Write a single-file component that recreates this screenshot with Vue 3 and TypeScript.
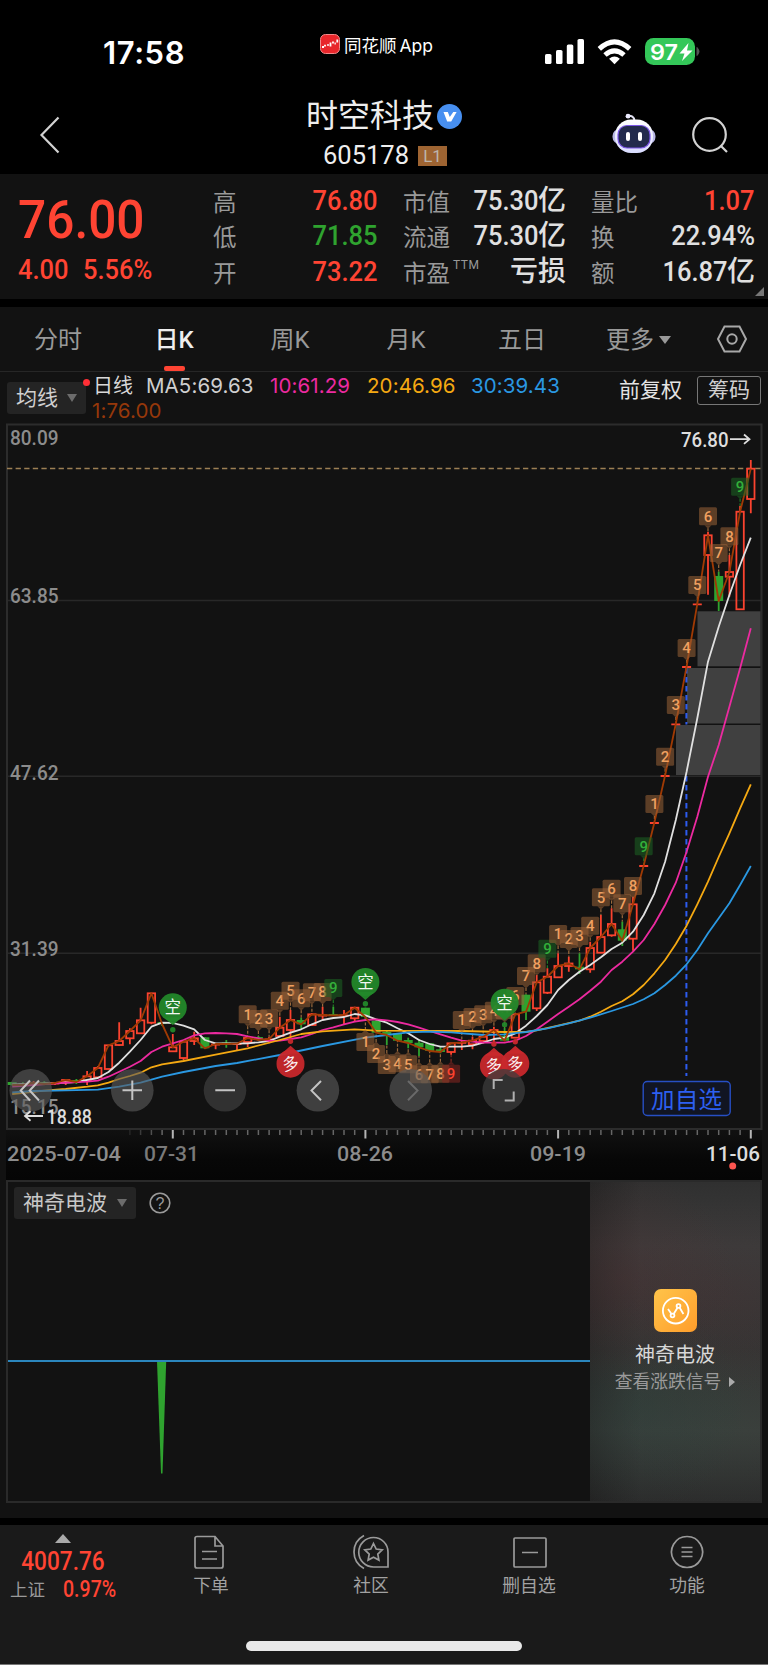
<script setup lang="ts">
type Candle = [up: number, high: number, low: number, top: number, bottom: number]
type Point = [k: number, y: number]

const STEP = 10.704
const px = (k: number): number => +(12.2 + k * STEP).toFixed(1)

const raw: Candle[] = [
  [0, 1082, 1085.5, 1082, 1085], [0, 1082, 1086, 1083, 1085], [1, 1081, 1086, 1083, 1084], [0, 1081, 1085, 1082, 1084],
  [1, 1082, 1085, 1083, 1084], [1, 1079, 1085, 1080, 1082], [0, 1079, 1084, 1080.5, 1082], [1, 1071, 1085, 1076.3, 1080.7],
  [1, 1066, 1077.3, 1068, 1077.3], [1, 1045.3, 1069, 1045.3, 1069], [1, 1022.3, 1046, 1041, 1045], [1, 1028.3, 1044.3, 1031, 1038.3],
  [1, 1007.7, 1034, 1020.3, 1033.3], [1, 993, 1024.3, 993.3, 1022.7], [0, 1022, 1026, 1022.5, 1024], [1, 1034, 1051.3, 1047.3, 1051.3],
  [1, 1041.7, 1060, 1041.7, 1058], [1, 1031.7, 1045, 1038.3, 1041], [0, 1037, 1049, 1037.3, 1048.3], [1, 1042.7, 1049.3, 1044, 1045],
  [0, 1040, 1047.7, 1043, 1044], [1, 1043.7, 1050, 1043.7, 1044.5], [1, 1036, 1047, 1038, 1042], [0, 1036, 1041, 1037, 1040],
  [1, 1037, 1043.3, 1039, 1040], [1, 1016.7, 1036.7, 1027.7, 1036], [1, 1010, 1040, 1020, 1030], [0, 1017.7, 1029.3, 1020, 1024.3],
  [1, 1013, 1026, 1014.3, 1025], [1, 1006.7, 1020, 1015, 1016], [0, 1006.7, 1015.5, 1014.5, 1015.5], [1, 1010, 1024, 1015, 1016],
  [1, 1006.7, 1021.7, 1007.7, 1018.3], [0, 1007.7, 1020, 1007.7, 1017], [0, 1020, 1033, 1020.7, 1032.7], [0, 1030, 1045, 1032, 1035],
  [0, 1033, 1041, 1033.3, 1040.7], [0, 1037.7, 1048.3, 1040, 1043], [0, 1039.3, 1056, 1042.7, 1047.3], [0, 1043, 1051.5, 1043.3, 1051],
  [0, 1046.7, 1053.3, 1049.3, 1052], [1, 1043, 1054.7, 1043.3, 1052], [1, 1040, 1050, 1042.3, 1043.3], [1, 1036.7, 1049.3, 1040.7, 1044.3],
  [1, 1036, 1043.3, 1036.7, 1041], [1, 1026.7, 1041.7, 1030, 1032], [0, 1028, 1041, 1036, 1040.7], [1, 1014.3, 1037.7, 1014.3, 1037.7],
  [0, 994.5, 1020, 994.7, 1011.7], [1, 975, 1011, 982.3, 1008.3], [1, 968.3, 994, 976.7, 992.7], [1, 953.3, 977.5, 966, 977.3],
  [1, 956.7, 971.7, 963.5, 966], [0, 953.3, 974, 966.7, 969.3], [1, 941.7, 972.7, 948, 969.3], [1, 915, 953.3, 937, 952.7],
  [1, 908.3, 936.7, 924, 935.3], [0, 921.7, 946, 929.3, 940.7], [1, 896.7, 950.7, 904.3, 938.7], [1, 865.5, 866.5, 865.5, 866.5],
  [1, 822.5, 823.5, 822.5, 823.5], [1, 775.5, 776.5, 775.5, 776.5], [1, 723.8, 724.8, 723.8, 724.8], [1, 666.5, 667.5, 666.5, 667.5],
  [1, 603.8, 604.8, 603.8, 604.8], [1, 531.7, 594.7, 535.3, 555], [0, 571.7, 611, 576, 601], [1, 555, 596.7, 572, 576.7],
  [1, 506, 609.3, 511.7, 609.3], [1, 460, 513.3, 468.7, 499],
]
const candles = raw.map(([up, high, low, top, bottom], k) => ({
  k, x: px(k), up: up === 1, high, low, top, bottom, flat: bottom - top < 1.8,
}))

const toLine = (pts: Point[]): string => pts.map(([k, y]) => `${px(k)},${y}`).join(' ')
const seq = (start: number, ys: number[]): Point[] => ys.map((y, i) => [start + i, y] as Point)

const closeLine = toLine(candles.map((c) => [c.k, c.up ? c.top : c.bottom] as Point))
const ma5 = toLine([[0, 1084.5], [3, 1083.5], [6, 1082], ...seq(7, [1080, 1078, 1072, 1062.7, 1051.7, 1040, 1026.7, 1022.7, 1023, 1025.7, 1029.3, 1040, 1043.3, 1043.3, 1043.5, 1043.3,
  1042.3, 1041, 1036.7, 1032.7, 1029.3, 1024.3, 1020, 1018, 1017, 1014, 1015.3, 1019.3, 1022.7, 1028.3, 1033.3, 1040, 1044,
  1046.7, 1046.7, 1046.7, 1045.7, 1042.7, 1039, 1037.7, 1033.3, 1025.7, 1016, 1005, 990, 980, 971.7, 965, 957.3, 949, 942.7, 931.7,
  915, 893.3, 861.7, 820, 771.7, 718.3, 661.7, 626.7, 595, 565, 537.7])])
const ma10 = toLine([[0, 1086.7], [2, 1085], [4, 1083.3], ...seq(6, [1082, 1081.7, 1080.7, 1076.7, 1071.7, 1066.7, 1061, 1052, 1046.7, 1043.3, 1040, 1035.3, 1033.3, 1033, 1033.3, 1034, 1036.3,
  1038.3, 1041, 1040.7, 1039, 1037.3, 1034, 1030, 1027.3, 1024.3, 1021.7, 1020, 1019.3, 1020.3, 1022, 1024.3, 1027.7, 1031,
  1034.3, 1037.7, 1040.7, 1041.7, 1042.7, 1042.7, 1042.7, 1040.7, 1036, 1029.3, 1021.7, 1014, 1006.7, 999.3, 990.7, 981.7, 970, 961.7,
  951.7, 940, 924, 905, 882.7, 851.7, 816.7, 776.7, 745, 706.7, 668.3, 628.3])])
const ma20 = toLine([[0, 1094], [3, 1090.7], [5, 1089], [7, 1086.7], [8, 1085.3], [9, 1082.7], [10, 1079], [11, 1076], [12, 1072.7], [13, 1067.3], [14, 1064.3],
  [16, 1061], [19, 1054.7], [22, 1048.3], [25, 1040], [27, 1034], [29, 1031.3], [32, 1029.3], [34, 1030.7], [42, 1031], [46, 1032],
  [48, 1032], [49, 1030.3], [51, 1025.7], [53, 1020.7], [54, 1016.7], ...seq(55, [1011.7, 1006, 1001.3, 994.3, 985, 973.3, 960, 944, 925.7, 904.3, 881.7, 857, 833.3, 808.3, 784.3])])
const ma30 = toLine([[0, 1092.3], [2, 1091], [5, 1090.3], [8, 1089.7], [10, 1086.7], [12, 1082.7], [14, 1076.7], [16, 1072], [19, 1066], [21, 1063],
  [25, 1055], [29, 1046], [33, 1037.7], [35, 1035], [37, 1032.3], [39, 1031.7], [41, 1032.3], [44, 1035], [46, 1034.3], [48, 1032], [50, 1028.3],
  [52, 1023.3], [54, 1017.7], [56, 1011], [58, 1004], ...seq(59, [999.3, 993.3, 985, 975.7, 964.3, 950, 933.3, 918.3, 903.3, 885, 866])])

type Tone = 'tan' | 'green' | 'red'
interface Badge { k: number; n: number; y: number; below: boolean; tone: Tone }
const run = (k0: number, ys: number[], below: boolean, nine: Tone): Badge[] =>
  ys.map((y, i) => ({ k: k0 + i, n: i + 1, y, below, tone: i === 8 ? nine : 'tan' }))
const badges: Badge[] = [
  ...run(22, [1014.3, 1019, 1018.3, 1000.7, 990.7, 998.3, 992.3, 992, 988], false, 'green'),
  ...run(33, [1042, 1054, 1065, 1063.3, 1064.3, 1074.3, 1074.3, 1073.7, 1073.7], true, 'red'),
  ...run(42, [1020, 1017, 1014.3, 1010.7, 1010, 996, 976, 963.3, 948.7], false, 'green'),
  ...run(51, [934, 939, 936, 925.7, 897.3, 888.7, 903.3, 886, 846.3], false, 'green'),
  ...run(60, [804, 756.7, 705, 648, 585, 516.3, 553, 536.3, 486.7], false, 'green'),
]
const badgePath = (b: Badge): string => {
  const x = px(b.k)
  const d = b.below ? -1 : 1
  return `M${x - 3.5} ${b.y + 9 * d}h7l-3.5 ${3.5 * d}z`
}

const signals = [
  { k: 15, y: 1007.3, dot: 1029.7, text: '空', sell: true },
  { k: 33, y: 982, dot: 1003.7, text: '空', sell: true },
  { k: 46, y: 1002.7, dot: 1024.7, text: '空', sell: true },
  { k: 26, y: 1063.7, dot: 1041.3, text: '多', sell: false },
  { k: 45, y: 1065.7, dot: 1044, text: '多', sell: false },
  { k: 47, y: 1063.7, dot: 1041.7, text: '多', sell: false },
]
const pinPath = (k: number, y: number, d: number): string => {
  const x = px(k)
  return `M${x - 9} ${y + 10 * d}L${x} ${y + 18 * d}L${x + 9} ${y + 10 * d}z`
}

const priceLabels = [
  { t: '80.09', y: 445 }, { t: '63.85', y: 603.3 }, { t: '47.62', y: 779.7 }, { t: '31.39', y: 956.3 }, { t: '15.15', y: 1114 },
]
const ticks = Array.from({ length: 59 }, (_, i) => {
  const k = i + 11
  return { x: px(k), major: [15, 33, 51, 69].includes(k), op: Math.min(1, (i + 1) / 4) }
})
const dates = [
  { t: '2025-07-04', x: 7, w: 114, c: '#8c8c8c' }, { t: '07-31', x: 144, w: 55, c: '#7a7a7a' }, { t: '08-26', x: 337, w: 56, c: '#8c8c8c' },
  { t: '09-19', x: 530, w: 56, c: '#8c8c8c' }, { t: '11-06', x: 706, w: 54, c: '#dcdcdc' },
]

const quotes = [
  [{ l: '高', v: '76.80', c: 'up' }, { l: '低', v: '71.85', c: 'down' }, { l: '开', v: '73.22', c: 'up' }],
  [{ l: '市值', v: '75.30', u: '亿' }, { l: '流通', v: '75.30', u: '亿' }, { l: '市盈', sup: 'TTM', v: '', u: '亏损' }],
  [{ l: '量比', v: '1.07', c: 'up' }, { l: '换', v: '22.94%' }, { l: '额', v: '16.87', u: '亿' }],
] as { l: string; v: string; c?: string; u?: string; sup?: string }[][]

const tabs = ['分时', '日K', '周K', '月K', '五日']
</script>

<template>
  <div class="phone">
    <header class="top">
      <div class="status">
        <span class="clock">17:58</span>
        <div class="app">
          <svg width="20" height="20" viewBox="0 0 20 20"><rect x=".5" y=".5" width="19" height="19" rx="5" fill="#e8262b" stroke="#f08a8a" /><path d="M2 13h2M5 12.5v-1.8M7.3 11h1.4M10.5 12.5V8.5M13 9.5V7.5M14.5 9.5h1.3M17.3 8.5v-3" stroke="#fff" stroke-width="1.8" /></svg>
          <span>同花顺<i>App</i></span>
        </div>
        <svg class="radio" width="160" height="30" viewBox="545 37 160 30">
          <g fill="#fff">
            <rect x="545" y="54" width="6.5" height="10" rx="1.6" /><rect x="556" y="50" width="6.5" height="14" rx="1.6" />
            <rect x="566.8" y="44.5" width="6.5" height="19.5" rx="1.6" /><rect x="577.5" y="39" width="6.5" height="25" rx="1.6" />
            <path d="M614.5 64.2l-5.4-5.5q5.4-4.4 10.8 0z" />
          </g>
          <g fill="none" stroke="#fff" stroke-width="5"><path d="M599.3 48.8q15.2-14 30.4 0" /><path d="M605 55q9.5-8.4 19 0" /></g>
          <rect x="645" y="38" width="50" height="27" rx="8.5" fill="#34c759" />
          <path d="M697 47.5q4 4 0 8z" fill="#555" stroke="#555" />
          <text x="650" y="60" class="bat" textLength="28" lengthAdjust="spacingAndGlyphs">97</text>
          <path d="M688.5 43l-9 10.500h5l-2.500 7.500 10.500-10.500h-5.500z" fill="#fff" />
        </svg>
      </div>
      <nav class="nav">
        <svg class="back" width="24" height="40" viewBox="0 0 24 40"><path d="M20.5 2.5L3.5 20l17 17.5" fill="none" stroke="#d2d2d2" stroke-width="2.2" /></svg>
        <div class="title">
          <div class="name">时空科技<svg width="25" height="25" viewBox="0 0 25 25"><circle cx="12.5" cy="12.5" r="12.5" fill="#478ff0" /><path d="M6.500 8h4.300l2 5 3.500-5h3.300l-5.400 9.500h-4z" fill="#fff" /></svg></div>
          <div class="code">605178<b>L1</b></div>
        </div>
        <svg class="bot" width="44" height="41" viewBox="0 0 44 41">
          <defs>
            <linearGradient id="shell" x1="0" y1="0" x2="0" y2="1"><stop offset="0" stop-color="#fff" /><stop offset="1" stop-color="#d9dcff" /></linearGradient>
          </defs>
          <path d="M15 2.8q7-1 7.500 5" fill="none" stroke="#e2e2f2" stroke-width="2" /><circle cx="16" cy="3.2" r="2.4" fill="#ecebff" />
          <rect x=".5" y="16" width="43" height="15" rx="7" fill="#b9b8e6" />
          <rect x="3" y="6.5" width="38" height="33.5" rx="16" fill="url(#shell)" />
          <rect x="6" y="12.5" width="32" height="22.5" rx="9" fill="#232b4d" stroke="#7a55e6" stroke-width="1.2" />
          <rect x="14" y="19" width="4" height="9" rx="2" fill="#fff" /><rect x="26" y="19" width="4" height="9" rx="2" fill="#fff" />
        </svg>
        <svg class="search" width="38" height="38" viewBox="0 0 38 38"><g fill="none" stroke="#d2d2d2" stroke-width="2.2"><circle cx="18.5" cy="18.5" r="16.3" /><path d="M29.5 29.5l6.500 6.500" /></g></svg>
      </nav>
    </header>

    <section class="quote">
      <div class="price">
        <div class="din big">76.00</div>
        <div class="chg"><span class="din">4.00</span><span class="din">5.56%</span></div>
      </div>
      <div v-for="(col, ci) in quotes" :key="ci" class="col" :class="'col' + ci">
        <div v-for="q in col" :key="q.l" class="cell">
          <span class="label">{{ q.l }}<sup v-if="q.sup">{{ q.sup }}</sup></span>
          <span class="val" :class="q.c"><span class="din">{{ q.v }}</span><em v-if="q.u">{{ q.u }}</em></span>
        </div>
      </div>
      <i class="corner"></i>
    </section>

    <section class="tabs">
      <span v-for="t in tabs" :key="t" class="tab" :class="{ on: t === '日K' }">{{ t }}</span>
      <span class="tab more">更多<i class="tri"></i></span>
      <svg class="hex" width="34" height="30" viewBox="0 0 34 30"><g fill="none" stroke="#a8a8a8" stroke-width="2"><path d="M9.500 2.500h15L31 15l-6.500 12.500h-15L3 15z" /><circle cx="17" cy="15" r="4.7" /></g></svg>
    </section>

    <section class="ma">
      <div class="pick">均线<i class="tri"></i><i class="dot"></i></div>
      <div class="lines">
        <div class="row"><span class="k">日线</span><span class="m5">MA5:69.63</span><span class="m10">10:61.29</span><span class="m20">20:46.96</span><span class="m30">30:39.43</span></div>
        <div class="row m1">1:76.00</div>
      </div>
      <span class="adj">前复权</span>
      <span class="chip">筹码</span>
    </section>

    <svg class="chart" width="768" height="757" viewBox="0 423 768 757">
      <defs><linearGradient id="axis" x1="0" y1="0" x2="0" y2="1"><stop offset="0" stop-color="#111" /><stop offset=".6" stop-color="#070707" /><stop offset="1" stop-color="#050505" /></linearGradient></defs>
      <rect x="6" y="1129" width="756" height="51" fill="url(#axis)" />
      <g stroke="#282828" stroke-width="1.5"><path d="M7 600.5H761M7 776.3H761M7 953.3H761" /></g>
      <rect x="7" y="424.5" width="754.5" height="704.5" fill="none" stroke="#2c2c2c" stroke-width="2" />
      <g fill="#404040"><rect x="697.5" y="611.3" width="63" height="55" /><rect x="687" y="668" width="73.5" height="55.5" /><rect x="676" y="725" width="84.5" height="50" /></g>
      <path d="M7 468.5H761" stroke="#9c7f54" stroke-width="1.4" stroke-dasharray="5.3 3.3" />
      <path d="M686.4 668V724.5M686.4 776V1076" stroke="#2d5cf0" stroke-width="2" stroke-dasharray="5.5 3.5" />
      <g class="num" font-size="21" fill="#8c8c8c">
        <text v-for="p in priceLabels" :key="p.t" x="10" :y="p.y" textLength="48.5" lengthAdjust="spacingAndGlyphs">{{ p.t }}</text>
      </g>
      <g v-for="b in badges" :key="'w' + b.k" stroke-width="1.2" stroke-dasharray="3 1.5" :stroke="b.tone === 'red' ? '#8a2a22' : b.tone === 'green' ? '#1f7a26' : '#9a6a3c'">
        <path :d="b.below ? `M${px(b.k)} ${b.y - 12}V${candles[b.k].low}` : `M${px(b.k)} ${b.y + 12}V${candles[b.k].high}`" />
      </g>
      <g v-for="c in candles" :key="c.k" :stroke="c.up ? '#fb432f' : '#2fa32f'" stroke-width="1.8">
        <path v-if="c.flat" :d="`M${c.x - 4.5} ${c.top + 0.5}h9M${c.x} ${c.high}V${c.low}`" />
        <template v-else-if="c.up">
          <path :d="`M${c.x} ${c.high}V${c.top}M${c.x} ${c.bottom}V${c.low}`" />
          <rect :x="c.x - 3.7" :y="c.top" width="7.4" :height="c.bottom - c.top" fill="none" />
        </template>
        <template v-else>
          <path :d="`M${c.x} ${c.high}V${c.low}`" />
          <rect :x="c.x - 4.5" :y="c.top" width="9" :height="c.bottom - c.top" fill="#2fa32f" stroke="none" />
        </template>
      </g>
      <g fill="none" stroke-width="1.8" stroke-linejoin="round">
        <polyline :points="ma5" stroke="#e0e0e0" /><polyline :points="ma10" stroke="#ec2aa0" />
        <polyline :points="ma20" stroke="#f5a912" /><polyline :points="ma30" stroke="#2a98e2" />
        <polyline :points="closeLine" stroke="#a03a04" />
      </g>
      <g v-for="b in badges" :key="b.k" :class="['badge', b.tone]">
        <g class="plate"><rect :x="px(b.k) - 9" :y="b.y - 9" width="18" height="18" rx="1.5" /><path :d="badgePath(b)" /></g>
        <text :x="px(b.k)" :y="b.y + 5.2" text-anchor="middle">{{ b.n }}</text>
      </g>
      <g v-for="s in signals" :key="'s' + s.k" :fill="s.sell ? '#23882a' : '#c8282c'" fill-opacity=".95">
        <circle :cx="px(s.k)" :cy="s.y" r="14" /><path :d="pinPath(s.k, s.y, s.sell ? 1 : -1)" />
        <circle :cx="px(s.k)" :cy="s.dot" r="2.7" />
        <text :x="px(s.k)" :y="s.y + 6" text-anchor="middle" class="sig" :transform="s.sell ? undefined : `rotate(-12 ${px(s.k)} ${s.y})`">{{ s.text }}</text>
      </g>
      <g>
        <g fill="#5c5c5c" fill-opacity=".62"><circle v-for="x in [30.7, 132.3, 317.9, 410.7]" :key="x" :cx="x" cy="1090.3" r="21.3" /></g>
        <g fill="#3c3c3c" fill-opacity=".75"><circle v-for="x in [225, 503.7]" :key="x" :cx="x" cy="1090.3" r="21.3" /></g>
        <g fill="none" stroke="#c4c4c4" stroke-width="2">
          <path d="M30 1080.5l-9.3 10 9.3 10M39 1080.5l-9.3 10 9.3 10M132.3 1080.5v19.5M122.5 1090.3H142M215.3 1090.3H235M321 1081l-9.5 9.6 9.5 9.6" />
          <path d="M408 1081l9.5 9.6-9.5 9.6" stroke="#6a6a6a" />
          <path d="M493.7 1089v-9h9M513.7 1091.5v9h-9" stroke="#b0b0b0" />
        </g>
      </g>
      <g class="num" font-size="21" fill="#dedede">
        <text x="681" y="446.5" textLength="47.5" lengthAdjust="spacingAndGlyphs">76.80</text>
        <text x="46.5" y="1123.5" textLength="45.5" lengthAdjust="spacingAndGlyphs">18.88</text>
      </g>
      <path d="M730 439.2H749M744 434.5l5.5 4.7-5.5 4.7M43 1116H25M30.5 1111.3l-5.5 4.7 5.5 4.7" fill="none" stroke="#dedede" stroke-width="1.8" />
      <rect x="643.2" y="1081.5" width="87" height="34" rx="4" fill="#111522" stroke="#274fc4" stroke-width="1.4" />
      <text x="651" y="1107.5" class="add" textLength="71">加自选</text>
      <g><path v-for="t in ticks" :key="t.x" :d="`M${t.x} 1130v${t.major ? 8.5 : 5}`" :stroke="t.major ? '#b5b5b5' : '#666'" :stroke-width="t.major ? 2 : 1.5" :opacity="t.op" /></g>
      <g class="num" font-size="21"><text v-for="d in dates" :key="d.t" :x="d.x" y="1160.7" :fill="d.c" :textLength="d.w" lengthAdjust="spacingAndGlyphs">{{ d.t }}</text></g>
      <circle cx="732.7" cy="1166" r="3.5" fill="#fb5550" />
    </svg>

    <section class="sub">
      <div class="plot">
        <div class="bar">
          <div class="pick2">神奇电波<i class="tri"></i></div>
          <svg width="22" height="22" viewBox="0 0 22 22"><circle cx="11" cy="11" r="9.8" fill="none" stroke="#9a9a9a" stroke-width="1.6" /><text x="11" y="16.500" text-anchor="middle" class="q">?</text></svg>
        </div>
        <svg class="wave" width="582" height="120" viewBox="8 1358 582 120"><path d="M157 1361h9.200l-3.700 112.500h-1.500z" fill="#2fa32f" /><path d="M8 1361H590" stroke="#2b86bd" stroke-width="2" /></svg>
      </div>
      <div class="promo">
        <svg width="43" height="43" viewBox="0 0 43 43">
          <defs><linearGradient id="gold" x1="0" y1="0" x2="1" y2="1"><stop offset="0" stop-color="#ffc44a" /><stop offset="1" stop-color="#ff9d2b" /></linearGradient></defs>
          <rect width="43" height="43" rx="7" fill="url(#gold)" />
          <g fill="none" stroke="#fff" stroke-width="1.8"><circle cx="21.7" cy="21.7" r="12.8" /><path d="M14 20l3.500 5M19.800 24.800l3.700-6M25.700 18.800l3.700 6.200" /><circle cx="18.5" cy="26.5" r="1.9" /><circle cx="24.5" cy="17" r="1.9" /></g>
        </svg>
        <div class="pn">神奇电波</div>
        <div class="pl">查看涨跌信号<i></i></div>
      </div>
    </section>

    <footer class="foot">
      <div class="index">
        <i></i>
        <div class="din v">4007.76</div>
        <div class="r"><span>上证</span><span class="din p">0.97%</span></div>
      </div>
      <div class="item i1"><svg width="38" height="38" viewBox="0 0 38 38"><path d="M5 3.500h18l8 9.500v20q0 2-2 2H5q-2 0-2-2v-27.500q0-2 2-2zM23 3.500V13h8M10 18.500h15M10 26h15" /></svg><span>下单</span></div>
      <div class="item i2"><svg width="38" height="38" viewBox="0 0 38 38"><path d="M12 2.500Q2 8 2 19t10 16.500M21.500 4.500a14.500 14.500 0 1 0 0 29.500H36V19A14.500 14.500 0 0 0 21.500 4.500zM21.500 10.500l2.700 5.500 6 .9-4.400 4.200 1.100 6-5.400-2.900-5.400 2.900 1.100-6-4.400-4.200 6-.9z" /></svg><span>社区</span></div>
      <div class="item i3"><svg width="38" height="38" viewBox="0 0 38 38"><path d="M5 5h30q1 0 1 1v27q0 1-1 1H5q-1 0-1-1V6q0-1 1-1zM12 19.500h16" /></svg><span>删自选</span></div>
      <div class="item i4"><svg width="38" height="38" viewBox="0 0 38 38"><path d="M19 3.500a15.500 15.500 0 1 0 .1 0zM13.500 14.500h11M13.500 19h11M13.500 23.500h11" /></svg><span>功能</span></div>
      <div class="home"></div>
    </footer>
  </div>
</template>

<style>
body { background: #111; }
</style>

<style scoped>
* { box-sizing: border-box; }
.phone { width: 768px; height: 1665px; overflow: hidden; background: #121212; color: #d8d8d8; font-family: Roboto, "Noto Sans CJK SC", sans-serif; display: flex; flex-direction: column; }
.phone > * { flex: none; }
i, em { font-style: normal; }
.din { display: inline-block; transform: scaleX(.91); transform-origin: right; font-weight: 500; }
.tri { display: inline-block; border: 6px solid transparent; border-top: 8px solid #6c6c6c; border-bottom: 0; }

.top { height: 174px; background: #000; }
.status { height: 90px; display: flex; align-items: flex-start; color: #fff; }
.clock { margin-left: 103px; margin-top: 34px; width: 217px; font: 600 31px/38px Inter, sans-serif; letter-spacing: .6px; }
.app { display: flex; gap: 4px; width: 225px; margin-top: 34px; font-size: 17.5px; line-height: 24px; }
.app i { margin-left: 3px; font: 17.5px Inter, sans-serif; }
.radio { margin-top: 37px; }
.bat { font: 600 22px Inter, sans-serif; fill: #fff; }
.nav { height: 84px; display: flex; align-items: flex-start; }
.back { margin: 25px 0 0 38px; }
.title { width: 269px; margin: 4px 0 0 244px; }
.name { height: 44px; display: flex; align-items: center; font-size: 32px; color: #eee; line-height: 44px; }
.name svg { margin-left: 3px; }
.code { display: flex; align-items: center; margin: 3px 0 0 17px; font-size: 25.5px; line-height: 28px; color: #eee; }
.code b { margin: 1px 0 0 9px; width: 29px; height: 20px; background: #9e6432; color: #bdb5ac; font-weight: 400; font-size: 17px; line-height: 20px; text-align: center; }
.bot { margin: 23px 0 0 37px; }
.search { margin: 26px 0 0 35px; }

.quote { height: 125px; display: flex; position: relative; }
.price { width: 213px; padding-left: 18px; color: #ff4433; }
.price .din { transform-origin: left; }
.big { font-size: 54.5px; line-height: 60px; margin-top: 15px; }
.chg { display: flex; margin-top: 4px; font-size: 28px; line-height: 34px; }
.chg span + span { margin-left: 9px; }
.col { padding-top: 9px; }
.cell { height: 35.5px; display: flex; justify-content: space-between; align-items: center; }
.col0 { width: 164px; }
.col1 { width: 163px; margin-left: 26px; }
.col2 { width: 164px; margin-left: 25px; }
.label { font-size: 23.5px; color: #999; line-height: 34px; padding-top: 4px; white-space: nowrap; }
.label sup { font-size: 12px; letter-spacing: .5px; vertical-align: 13px; line-height: 0; margin-left: 3px; }
.val { font-size: 28px; line-height: 34px; color: #e0e0e0; white-space: nowrap; display: flex; }
.val em { font-size: 28px; font-weight: 500; }
.up { color: #ff4433; }
.down { color: #2fa32f; }
.corner { position: absolute; right: 4px; bottom: 3px; border-left: 9px solid transparent; border-bottom: 9px solid #777; }

.tabs { height: 73px; border-top: 8px solid #000; border-bottom: 1.5px solid #262626; display: flex; align-items: center; }
.tab { width: 116px; text-align: center; font-size: 24px; line-height: 66px; height: 64px; color: #999; position: relative; }
.tab.on { color: #eee; font-weight: 500; }
.tab.on::after { content: ""; position: absolute; left: 48px; bottom: 0; width: 21px; height: 5px; border-radius: 2px; background: #ff4433; }
.more { width: 104px; text-align: left; padding-left: 26px; }
.more .tri { border-top-color: #999; margin-left: 5px; vertical-align: 4px; }
.hex { margin-left: 31px; }

.ma { height: 51px; display: flex; position: relative; }
.pick { position: relative; margin: 10px 0 0 7px; width: 79px; height: 32px; background: #242424; border-radius: 3px; font-size: 21px; line-height: 31px; padding-left: 9px; color: #d0d0d0; display: flex; align-items: center; gap: 9px; white-space: nowrap; }
.dot { position: absolute; right: -4px; top: -3px; width: 7px; height: 7px; border-radius: 50%; background: #ff2f36; }
.lines { margin-left: 7px; width: 526px; }
.row { display: flex; align-items: baseline; font: 20.5px/24px Inter, "Noto Sans CJK SC", sans-serif; margin-top: 2px; letter-spacing: .1px; }
.row + .row { margin-top: 1px; }
.k { width: 53px; font-size: 20px; letter-spacing: 0; }
.m5 { width: 124px; color: #cfcfcf; }
.m10 { width: 97px; color: #ec2aa0; }
.m20 { width: 104px; color: #f5a912; }
.m30 { color: #2a98e2; }
.m1 { color: #96380a; margin-left: -1px; }
.adj { width: 78px; font-size: 21px; line-height: 37px; color: #e4e4e4; }
.chip { margin-top: 4px; width: 64px; height: 29px; border: 1.5px solid #777; border-radius: 3px; font-size: 21px; line-height: 26px; text-align: center; color: #d0d0d0; }

.chart { display: block; }
.num { font-family: Roboto, sans-serif; font-weight: 500; }
.badge text { font: 500 15px Roboto, sans-serif; fill: #f0a060; }
.plate { fill: #9a6238; opacity: .55; }
.badge.green .plate { fill: #1c6423; }
.badge.green text { fill: #33b03a; }
.badge.red .plate { fill: #8a2622; }
.badge.red text { fill: #fb432f; }
.sig { font: 400 16.5px "Noto Sans CJK SC", sans-serif; fill: #fff; }
.add { font: 400 23.5px "Noto Sans CJK SC", sans-serif; fill: #2d60f0; }

.sub { height: 323px; margin: 0 6px; border: 2px solid #2a2a2a; display: flex; }
.plot { width: 582px; }
.bar { height: 32px; margin: 5px 0 0 6px; display: flex; align-items: center; gap: 13px; }
.pick2 { width: 122px; height: 32px; border-radius: 3px; background: #242424; font-size: 21px; line-height: 31px; padding-left: 9px; color: #c8c8c8; display: flex; align-items: center; gap: 10px; white-space: nowrap; }
.pick2 .tri, .pick .tri { border-width: 8px 5.5px 0; }
.q { font: 16px "Liberation Sans", sans-serif; fill: #9a9a9a; }
.wave { display: block; margin-top: 139px; }
.promo { flex: 1; display: flex; flex-direction: column; align-items: center; background: radial-gradient(circle at 20% 30%, rgba(88, 44, 46, .28), transparent 42%), radial-gradient(circle at 82% 36%, rgba(76, 48, 50, .25), transparent 40%), radial-gradient(circle at 28% 70%, rgba(38, 66, 58, .35), transparent 42%), radial-gradient(circle at 80% 72%, rgba(48, 70, 60, .25), transparent 40%), linear-gradient(90deg, rgba(18, 18, 18, .35), transparent 30%), linear-gradient(#303030, #3b3b3b 20%, #353333 52%, #3c3e3c 78%, #2c2c2c); }
.promo svg { margin-top: 107px; }
.pn { font-size: 20px; line-height: 28px; margin-top: 9px; color: #d8d8d8; }
.pl { font-size: 17.8px; line-height: 26px; color: #9a9a9a; display: flex; align-items: center; white-space: nowrap; }
.pl i { margin-left: 8px; border: 5.5px solid transparent; border-left: 6px solid #aaa; border-right: 0; }

.foot { height: 147px; margin-top: 15px; border-top: 7px solid #000; border-bottom: 1px solid #777; background: #1a1a1a; position: relative; display: flex; }
.index { width: 126px; display: flex; flex-direction: column; align-items: center; color: #ff4433; }
.index > i { margin-top: 9px; border: 8px solid transparent; border-bottom: 9px solid #aaa; border-top: 0; }
.index .v { transform: scaleX(.87); transform-origin: center; }
.v { font-size: 26px; line-height: 32px; margin-top: 2px; }
.r { display: flex; align-items: center; align-self: flex-start; margin-left: 10px; line-height: 26px; font-size: 17.5px; color: #999; white-space: nowrap; }
.index .p { font-size: 23px; color: #ff4433; margin-left: 18px; transform: scaleX(.85); transform-origin: left; }
.item { display: flex; flex-direction: column; align-items: center; width: 80px; padding-top: 8px; font-size: 17.8px; color: #a2a2a2; line-height: 26px; }
.item svg { fill: none; stroke: #9a9a9a; stroke-width: 1.7; }
.item span { margin-top: 2px; white-space: nowrap; }
.i1 { margin-left: 45px; }
.i2 { margin-left: 80px; }
.i3 { margin-left: 78px; }
.i4 { margin-left: 78px; }
.home { position: absolute; left: 246px; bottom: 13px; width: 276px; height: 10px; border-radius: 5px; background: #e8e8e8; }
</style>
